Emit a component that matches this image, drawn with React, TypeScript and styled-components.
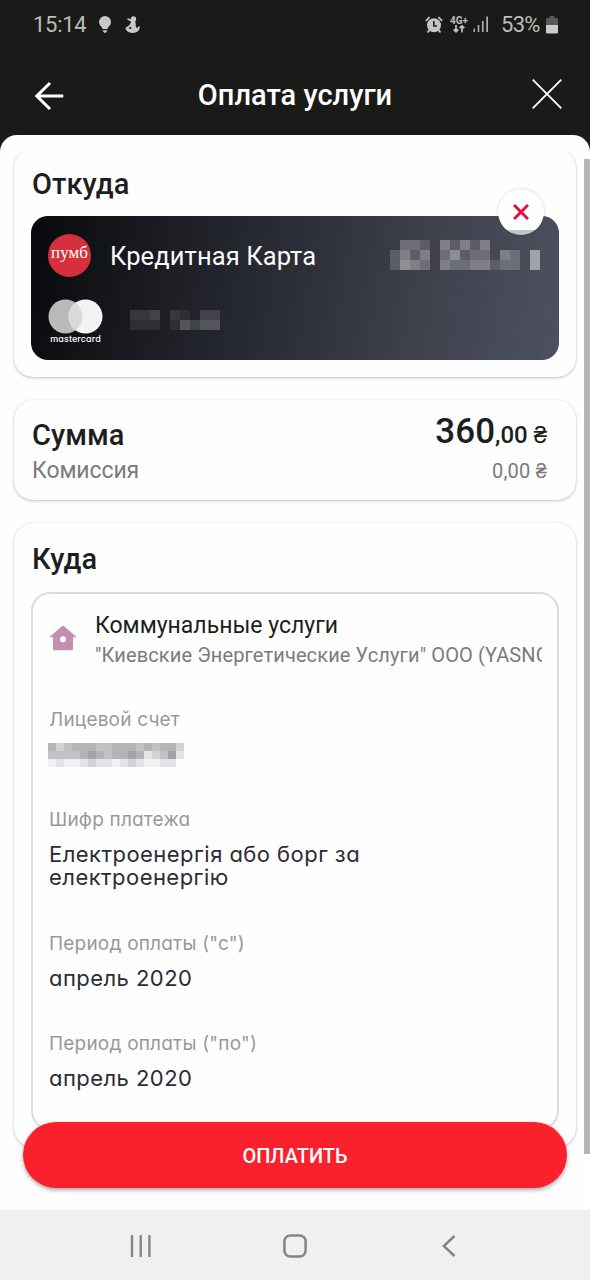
import React from 'react';
import styled, { createGlobalStyle } from 'styled-components';

const GlobalStyle = createGlobalStyle`
  *, *::before, *::after { box-sizing: border-box; }
  body { margin: 0; background: #1a1a18; font-family: Roboto, "Liberation Sans", sans-serif; }
  svg { display: block; flex: none; }
`;

const Screen = styled.div`
  width: 590px;
  height: 1280px;
  display: flex;
  flex-direction: column;
  overflow: hidden;
  background: #1a1a18;
`;

const StatusBar = styled.div`
  height: 48px;
  flex: none;
  display: flex;
  align-items: center;
  padding: 1px 32px 0 33px;
  color: #bdbdbd;
  font-size: 22px;
  line-height: 48px;
`;

const Clock = styled.span`
  width: 65px;
  letter-spacing: -0.3px;
`;

const NotificationIcons = styled.div`
  flex: 1;
  display: flex;
  gap: 13px;
`;

const BatteryLabel = styled.span`
  width: 45px;
  margin-left: 12px;
  letter-spacing: -0.7px;
  white-space: nowrap;
`;

const NetworkType = styled.div`
  display: flex;
  flex-direction: column;
  align-items: center;
  margin: 0 5px 0 7px;
  width: 18px;
  font-size: 10px;
  font-weight: 700;
  line-height: 9px;
`;

const Header = styled.header`
  height: 87px;
  flex: none;
  display: flex;
  align-items: center;
  justify-content: space-between;
  padding: 6px 28px 0 34px;
  color: #fff;
`;

const HeaderTitle = styled.h1`
  margin: 0 6px 0 0;
  font-size: 29px;
  font-weight: 500;
  line-height: 34px;
`;

const Sheet = styled.main`
  flex: 1;
  min-height: 0;
  position: relative;
  display: flex;
  padding-top: 17px;
  border-radius: 17px 17px 0 0;
  background: #fefefe;
`;

const Content = styled.div`
  flex: 1;
  overflow: hidden;
  display: flex;
  flex-direction: column;
  gap: 23px;
  padding: 0 8px 0 14px;
`;

const ScrollThumb = styled.div`
  width: 6px;
  height: 995px;
  margin-top: 7px;
  background: #b5b5b5;
`;

const Card = styled.section<{ $height: number; $top: number; $clipped?: boolean }>`
  position: relative;
  flex: none;
  height: ${(p) => p.$height}px;
  margin-top: ${(p) => (p.$clipped ? -3 : 0)}px;
  padding: ${(p) => p.$top}px 17px 0;
  border-radius: 19px;
  background: #fefefe;
  box-shadow: 0 1px 3px rgba(0, 0, 0, 0.24), 0 0 1px rgba(0, 0, 0, 0.1);
`;

const CardTitle = styled.h2`
  margin: 0;
  padding-left: 1px;
  font-size: 29px;
  font-weight: 500;
  line-height: 34px;
  color: #1e1e1e;
`;

const SourceCard = styled.div`
  height: 144px;
  margin-top: 15px;
  padding: 17px 9px 0 17px;
  border-radius: 17px;
  background: linear-gradient(100deg, #08090c 0%, #1a1c21 24%, #2c2f38 50%, #40434e 75%, #4d505e 100%);
`;

const SourceRow = styled.div`
  display: flex;
  align-items: center;
  height: 44px;
`;

const NetworkRow = styled(SourceRow)`
  height: 46px;
  margin-top: 22px;
  align-items: flex-start;
`;

const BankLogo = styled.div`
  width: 43px;
  height: 43px;
  border-radius: 50%;
  background: #d5303b;
  color: #fff;
  font: 17px/38px "Liberation Serif", serif;
  text-align: center;
`;

const SourceName = styled.span`
  flex: 1;
  margin-left: 19px;
  padding-top: 2px;
  color: #fafafa;
  font-size: 25.500px;
  line-height: 44px;
  letter-spacing: 0.1px;
`;

const CardBrand = styled.div`
  width: 55px;
  margin-right: 27px;
`;

const BrandName = styled.div`
  text-align: center;
  color: #fff;
  font: 500 9px/10px Inter, sans-serif;
  letter-spacing: 0.1px;
  font-feature-settings: "cv11";
`;

const MaskedNumber = styled.div`
  padding-top: 11px;
`;

const RemoveButton = styled.button`
  position: absolute;
  top: 40px;
  right: 32px;
  width: 46px;
  height: 46px;
  padding: 0;
  display: flex;
  align-items: center;
  justify-content: center;
  border: 0;
  border-radius: 50%;
  background: linear-gradient(#fefefe 41px, #c3c4c8 41px);
  box-shadow: 0 0 3px rgba(0, 0, 0, 0.22);
`;

const SumLine = styled.div`
  display: flex;
  justify-content: space-between;
  height: 34px;
  padding-right: 12px;
`;

const FeeLine = styled(SumLine)`
  align-items: baseline;
  margin-top: 2px;
  padding-left: 1px;
  line-height: 34px;
  font-size: 23px;
  letter-spacing: -0.1px;
  color: #7b7b7b;
`;

const Amount = styled.span`
  margin-top: -3px;
  font-size: 24px;
  font-weight: 500;
  line-height: 34px;
  color: #1e1e1e;
  strong { font-size: 35px; font-weight: 500; }
`;

const Fee = styled.span`
  font-size: 20px;
  letter-spacing: 0.2px;
`;

const Payee = styled.div`
  height: 538px;
  margin-top: 16px;
  padding: 18px 15px 0;
  border: 2px solid #dcdcdc;
  border-radius: 19px;
`;

const PayeeHead = styled.div`
  display: flex;
  align-items: flex-start;
  height: 56px;
  padding-left: 2px;
`;

const PayeeIcon = styled.div`
  padding-top: 14px;
`;

const PayeeText = styled.div`
  flex: 1;
  min-width: 0;
  margin-left: 19px;
  overflow: hidden;
  white-space: nowrap;
`;

const PayeeCategory = styled.div`
  font-size: 23px;
  line-height: 28px;
  color: #1e1e1e;
`;

const PayeeName = styled.div`
  font-size: 20px;
  line-height: 31px;
  letter-spacing: 0.12px;
  color: #7b7b7b;
`;

const Fields = styled.dl`
  margin: 40px 0 0;
  padding-left: 1px;
  display: flex;
  flex-direction: column;
  gap: 42.300px;
  font-family: Inter, "Liberation Sans", sans-serif;
  font-feature-settings: "cv11";
  line-height: 23px;
`;

const FieldLabel = styled.dt`
  font-size: 19px;
  letter-spacing: 0.2px;
  color: #98989c;
`;

const FieldValue = styled.dd`
  margin: 12px 0 0;
  min-height: 23px;
  width: 340px;
  font-size: 22px;
  letter-spacing: 0.45px;
  color: #2c2c34;
`;

const MaskedAccount = styled.div`
  margin-left: -1px;
  height: 23px;
`;

const PayButton = styled.button`
  position: absolute;
  left: 23px;
  right: 23px;
  bottom: 22px;
  height: 66px;
  border: 0;
  border-radius: 33px;
  background: #fb212c;
  box-shadow: 0 2px 4px rgba(0, 0, 0, 0.35);
  color: #fff;
  font: 500 20px/66px Roboto, sans-serif;
`;

const NavBar = styled.nav`
  height: 70px;
  flex: none;
  display: flex;
  align-items: center;
  justify-content: space-between;
  padding: 1px 134px 0 130px;
  background: #f0f0f0;
  box-shadow: 0 -1px 2px rgba(0, 0, 0, 0.05);
`;

const HomeButton = styled.div`
  margin-right: 5px;
`;

/* Censored values: each cell is a brightness level, "." leaves a gap. */
const Mosaic = ({ rows, cell, palette }: { rows: string[]; cell: number; palette: Record<string, string> }) => (
  <svg width={rows[0].length * cell} height={rows.length * cell} shapeRendering="crispEdges">
    {rows.flatMap((row, y) =>
      row.split('').map((c, x) =>
        c === '.' ? null : (
          <rect key={`${x}-${y}`} x={x * cell} y={y * cell} width={cell} height={cell} fill={palette[c]} />
        ),
      ),
    )}
  </svg>
);

const lightCells = { a: '#f1f1f3', b: '#e4e4e6', c: '#d3d3d6', d: '#c2c2c6', e: '#b3b3b8', f: '#a2a2aa' };
const darkCells = { a: '#4a4d58', b: '#5b5e68', c: '#6c6f77', d: '#7e8086', e: '#8c8f95', f: '#a0a2a8' };
const dimCells = { a: '#26272c', b: '#2e2f34', c: '#37383d', d: '#424348', e: '#54555a' };

const Field = ({ label, children }: { label: string; children: React.ReactNode }) => (
  <div>
    <FieldLabel>{label}</FieldLabel>
    <FieldValue>{children}</FieldValue>
  </div>
);

const BulbIcon = () => (
  <svg width="14" height="18" viewBox="0 0 14 18" fill="#c8c8c8">
    <path d="M7 0a6 6 0 0 1 6 6c0 2.400-1.300 3.700-2.700 5.100L9.400 13H4.600l-.9-1.900C2.300 9.700 1 8.400 1 6a6 6 0 0 1 6-6zM4.500 14.300h5L7.900 16.800H6.100z" />
  </svg>
);

const FigureIcon = () => (
  <svg width="15" height="18" viewBox="0 0 15 18" fill="#c8c8c8">
    <circle cx="8.500" cy="3" r="2.700" />
    <path d="M2.600 2.300 6.500 3.600 10.400 5.500l.6 5.500 1.200 1.300 1.500-2.300 1.100.7c-.1 3.800-2.600 6.200-7.200 6.200C3.500 16.900.8 14.500.4 12L5 8.500 6 5.600 2.300 3.700z" />
    <path d="M3.300 12.200 5.800 10.600l.7 2.300z" fill="#1a1a18" />
  </svg>
);

const AlarmIcon = () => (
  <svg width="18" height="18" viewBox="0 0 18 18" fill="none" stroke="#c4c4c4">
    <circle cx="9" cy="9.300" r="7" fill="#c4c4c4" stroke="none" />
    <path d="M.8 4.800 4.600 1.200M17.200 4.800l-3.800-3.600" strokeWidth="1.800" />
    <path d="m4.500 14-2 2.500m11-2.500 2 2.500" strokeWidth="2" />
    <path d="M8.800 5v5H12" stroke="#1a1a18" strokeWidth="1.500" />
  </svg>
);

const DataArrows = () => (
  <svg width="12" height="8" viewBox="0 0 12 8" fill="none" stroke="#c4c4c4" strokeWidth="1.700">
    <path d="M3 0v6.500M.7 4.300 3 6.700l2.300-2.400M9 7.500V1M6.700 3.200 9 .9l2.300 2.300" />
  </svg>
);

const SignalIcon = () => (
  <svg width="16" height="17" viewBox="0 0 16 17" fill="#b0b0b0">
    <path d="M.5 12.500h1.500V16H.5zM4.700 9h1.600v7H4.700zM9 5h1.600v11H9zM13.300.5H15V16h-1.700z" />
  </svg>
);

const BatteryIcon = () => (
  <svg width="12" height="18" viewBox="0 0 12 18">
    <path d="M3.500 0h5v2H12v7H0V2h3.500z" fill="#575757" />
    <path d="M0 9h12v7.500a1 1 0 0 1-1 1H1a1 1 0 0 1-1-1z" fill="#cacaca" />
  </svg>
);

const BackIcon = () => (
  <svg width="30" height="30" viewBox="0 -2 30 30" fill="none" stroke="#fff" strokeWidth="3">
    <path d="M29.300 14H3M16 1 2.800 14 16 27" />
  </svg>
);

const CloseIcon = () => (
  <svg width="30" height="32" viewBox="0 0 30 32" stroke="#fff" strokeWidth="1.900">
    <path d="m.7.7 28.600 28.600M29.300.7.7 29.300" />
  </svg>
);

const RemoveIcon = () => (
  <svg width="16" height="16" viewBox="0 0 16 16" stroke="#dd143f" strokeWidth="3">
    <path d="m1 1 14 14M15 1 1 15" />
  </svg>
);

const BrandCircles = () => (
  <svg width="55" height="35" viewBox="0 0 55 35">
    <circle cx="17.500" cy="17.500" r="17" fill="#bababa" />
    <circle cx="37.500" cy="17.500" r="17" fill="#f3f3f3" />
    <path d="M27.500 3.750a17 17 0 0 1 0 27.500 17 17 0 0 1 0-27.500z" fill="#dadada" />
  </svg>
);

const HouseIcon = () => (
  <svg width="26" height="25" viewBox="0 0 26 25">
    <path
      d="M13 0c.7 0 1.200.3 1.700.8L26 10.500c.2.600 0 .8-.4.8H23V23c0 .8-.4 1.200-1.200 1.200H4.200C3.400 24.200 3 23.800 3 23V11.300H.4c-.4 0-.6-.2-.4-.8L11.300.8C11.800.3 12.300 0 13 0z"
      fill="#c28fb0"
    />
    <circle cx="13" cy="13.300" r="3" fill="#fff" />
  </svg>
);

const RecentsIcon = () => (
  <svg width="22" height="22" viewBox="0 0 22 22" fill="#858585">
    <path d="M.8 0h2.400v22H.8zM9.500 0h2.400v22H9.500zM18.200 0h2.400v22h-2.400z" />
  </svg>
);

const HomeIcon = () => (
  <svg width="24" height="24" viewBox="0 0 24 24" fill="none" stroke="#858585" strokeWidth="2.500">
    <rect x="1.400" y="1.400" width="21.200" height="21.200" rx="6" />
  </svg>
);

const NavBackIcon = () => (
  <svg width="14" height="22" viewBox="0 0 14 22" fill="none" stroke="#858585" strokeWidth="2.500">
    <path d="M12.500 1 1.800 11l10.700 10" />
  </svg>
);

export default function App() {
  return (
    <Screen>
      <GlobalStyle />
      <StatusBar>
        <Clock>15:14</Clock>
        <NotificationIcons>
          <BulbIcon />
          <FigureIcon />
        </NotificationIcons>
        <AlarmIcon />
        <NetworkType>
          4G+
          <DataArrows />
        </NetworkType>
        <SignalIcon />
        <BatteryLabel>53%</BatteryLabel>
        <BatteryIcon />
      </StatusBar>
      <Header>
        <BackIcon />
        <HeaderTitle>Оплата услуги</HeaderTitle>
        <CloseIcon />
      </Header>
      <Sheet>
        <Content>
          <Card $height={228} $top={18} $clipped>
            <CardTitle>Откуда</CardTitle>
            <SourceCard>
              <SourceRow>
                <BankLogo>пумб</BankLogo>
                <SourceName>Кредитная Карта</SourceName>
                <Mosaic
                  cell={10}
                  palette={darkCells}
                  rows={['.ccb.dbdbd......', 'bdbd.cebcc.dc.f.', 'bedc.dccddbcc.f.']}
                />
              </SourceRow>
              <NetworkRow>
                <CardBrand>
                  <BrandCircles />
                  <BrandName>mastercard</BrandName>
                </CardBrand>
                <MaskedNumber>
                  <Mosaic cell={10} palette={dimCells} rows={['ccd.cb.dd', 'bbb.bedee']} />
                </MaskedNumber>
              </NetworkRow>
            </SourceCard>
            <RemoveButton>
              <RemoveIcon />
            </RemoveButton>
          </Card>
          <Card $height={100} $top={18}>
            <SumLine>
              <CardTitle>Сумма</CardTitle>
              <Amount>
                <strong>360</strong>,00 ₴
              </Amount>
            </SumLine>
            <FeeLine>
              <span>Комиссия</span>
              <Fee>0,00 ₴</Fee>
            </FeeLine>
          </Card>
          <Card $height={624} $top={19}>
            <CardTitle>Куда</CardTitle>
            <Payee>
              <PayeeHead>
                <PayeeIcon>
                  <HouseIcon />
                </PayeeIcon>
                <PayeeText>
                  <PayeeCategory>Коммунальные услуги</PayeeCategory>
                  <PayeeName>"Киевские Энергетические Услуги" ООО (YASNO)</PayeeName>
                </PayeeText>
              </PayeeHead>
              <Fields>
                <Field label="Лицевой счет">
                  <MaskedAccount>
                    <Mosaic
                      cell={8}
                      palette={lightCells}
                      rows={['ecdeeeddeeededeec', 'ddddefedeefebcdfb', 'abaabcbbabcbaabb.']}
                    />
                  </MaskedAccount>
                </Field>
                <Field label="Шифр платежа">Електроенергія або борг за електроенергію</Field>
                <Field label={'Период оплаты ("с")'}>апрель 2020</Field>
                <Field label={'Период оплаты ("по")'}>апрель 2020</Field>
              </Fields>
            </Payee>
          </Card>
        </Content>
        <ScrollThumb />
        <PayButton>ОПЛАТИТЬ</PayButton>
      </Sheet>
      <NavBar>
        <RecentsIcon />
        <HomeButton>
          <HomeIcon />
        </HomeButton>
        <NavBackIcon />
      </NavBar>
    </Screen>
  );
}
